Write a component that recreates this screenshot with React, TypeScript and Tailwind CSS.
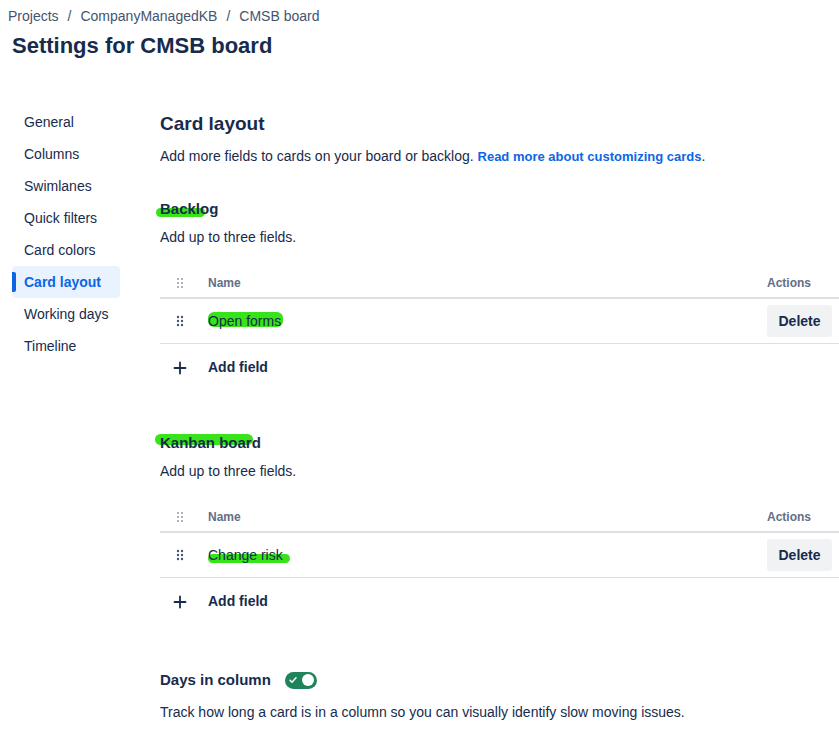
import React from "react";

const font = { fontFamily: '"Liberation Sans", Arial, sans-serif' };

function Dots({ light }: { light?: boolean }) {
  const c = light ? "#8590a2" : "#44546f";
  const r = light ? 0.9 : 1.2;
  const pts: [number, number][] = [];
  for (const y of [2, 6, 10]) for (const x of [2, 6]) pts.push([x, y]);
  return (
    <svg width="8" height="12" viewBox="0 0 8 12">
      {pts.map(([x, y], i) => (
        <circle key={i} cx={x} cy={y} r={r} fill={c} />
      ))}
    </svg>
  );
}

function Highlight({ className }: { className: string }) {
  return <span className={"absolute bg-[#22e000] opacity-90 rounded-[6px] " + className} />;
}

function FieldTable({ name, hl }: { name: string; hl: string }) {
  return (
    <div className="mt-[22px] w-[679px]">
      <div className="flex items-center h-[30px] border-b-2 border-[#dcdfe4] text-[12px] font-bold text-[#626f86]">
        <div className="w-[48px] flex pl-[16px]">
          <Dots light />
        </div>
        <div className="flex-1">Name</div>
        <div className="w-[72px]">Actions</div>
      </div>
      <div className="flex items-center h-[45px] border-b border-[#dcdfe4]">
        <div className="w-[48px] flex pl-[16px]">
          <Dots />
        </div>
        <div className="flex-1 text-[14px] text-[#172b4d]">
          <span className="relative inline-block">
            <Highlight className={hl} />
            <span className="relative">{name}</span>
          </span>
        </div>
        <div className="w-[72px]">
          <button className="h-[32px] w-[65px] rounded-[3px] bg-[#f1f2f4] text-[14px] font-bold text-[#172b4d]">
            Delete
          </button>
        </div>
      </div>
      <div className="flex items-center h-[47px]">
        <div className="w-[48px] flex pl-[13px]">
          <svg width="14" height="14" viewBox="0 0 14 14">
            <path d="M7 1.5v11M1.5 7h11" stroke="#172b4d" strokeWidth="1.8" strokeLinecap="round" />
          </svg>
        </div>
        <div className="text-[14px] font-bold text-[#172b4d]">Add field</div>
      </div>
    </div>
  );
}

export default function App() {
  const nav = ["General", "Columns", "Swimlanes", "Quick filters", "Card colors", "Card layout", "Working days", "Timeline"];
  return (
    <div className="w-[839px] h-[731px] bg-white overflow-hidden text-[#172b4d]" style={font}>
      <div className="pl-[8px] pt-[6px] text-[14px] text-[#44546f] flex gap-[9px]">
        <span>Projects</span>
        <span>/</span>
        <span>CompanyManagedKB</span>
        <span>/</span>
        <span>CMSB board</span>
      </div>
      <h1 className="pl-[12px] mt-[4px] text-[22px] font-bold leading-[30px] text-[#172b4d]">Settings for CMSB board</h1>
      <div className="flex mt-[45px]">
        <nav className="w-[160px] pl-[12px] flex flex-col">
          {nav.map((n) => {
            const active = n === "Card layout";
            return (
              <div
                key={n}
                className={
                  "relative h-[32px] w-[108px] flex items-center pl-[12px] text-[14px] rounded-[4px] " +
                  (active ? "bg-[#e9f2ff] text-[#0c66e4] font-bold" : "text-[#172b4d]")
                }
              >
                {active && <span className="absolute left-0 top-[6px] h-[20px] w-[4px] rounded-r-[2px] bg-[#0c66e4]" />}
                {n}
              </div>
            );
          })}
        </nav>
        <main className="flex-1">
          <h2 className="text-[19px] font-bold leading-[24px] mt-[6px]">Card layout</h2>
          <p className="text-[14px] mt-[10px] leading-[20px]">
            Add more fields to cards on your board or backlog.{" "}
            <span className="text-[#0c66e4] font-bold text-[13px]">Read more about customizing cards</span>.
          </p>
          <h3 className="text-[15px] font-bold mt-[32px] leading-[20px]">
            <span className="relative inline-block">
              <Highlight className="left-[-4px] top-[9px] w-[49px] h-[9px] rounded-[5px]" />
              <span className="relative">Backlog</span>
            </span>
          </h3>
          <p className="text-[14px] mt-[8px] leading-[20px]">Add up to three fields.</p>
          <FieldTable name="Open forms" hl="left-[0px] top-[1px] w-[75px] h-[15px]" />
          <h3 className="text-[15px] font-bold mt-[42px] leading-[20px]">
            <span className="relative inline-block">
              <Highlight className="left-[-5px] top-[1px] w-[98px] h-[11px] rounded-[5px]" />
              <span className="relative">Kanban board</span>
            </span>
          </h3>
          <p className="text-[14px] mt-[8px] leading-[20px]">Add up to three fields.</p>
          <FieldTable name="Change risk" hl="left-[0px] top-[9px] w-[82px] h-[9px]" />
          <div className="flex items-center mt-[44px] gap-[14px]">
            <span className="text-[15px] font-bold">Days in column</span>
            <div className="w-[32px] h-[17px] rounded-full bg-[#1f845a] flex items-center justify-between px-[3px]">
              <svg width="10" height="10" viewBox="0 0 10 10">
                <path d="M2 5.2l2 2 4-4.4" stroke="white" strokeWidth="1.5" fill="none" strokeLinecap="round" strokeLinejoin="round" />
              </svg>
              <span className="w-[12px] h-[12px] rounded-full bg-white" />
            </div>
          </div>
          <p className="text-[14px] mt-[10px] leading-[20px]">
            Track how long a card is in a column so you can visually identify slow moving issues.
          </p>
        </main>
      </div>
    </div>
  );
}
